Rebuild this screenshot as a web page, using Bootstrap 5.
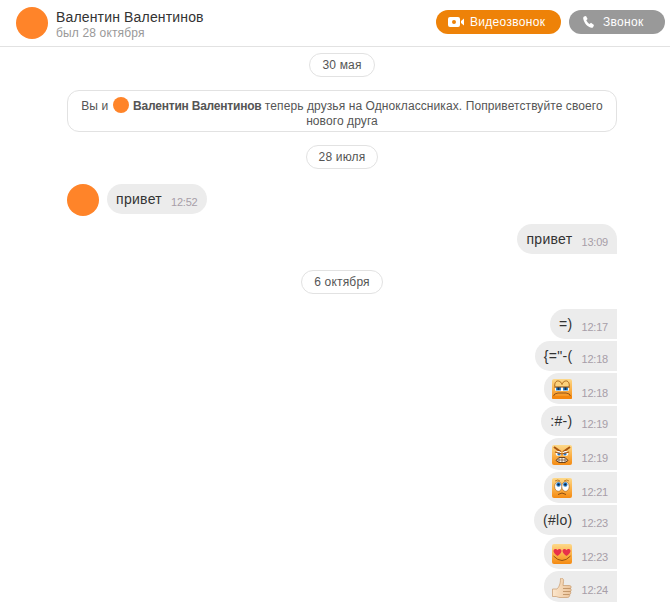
<!DOCTYPE html>
<html lang="ru">
<head>
<meta charset="utf-8">
<title>Чат</title>
<link rel="stylesheet" href="https://cdn.jsdelivr.net/npm/bootstrap@5.3.0/dist/css/bootstrap.min.css">
<style>
html,body{height:100%;overflow:hidden}
body{font-family:"Liberation Sans",Arial,sans-serif;color:#333;background:#fff;font-size:12px}
.top-bar{height:47px;border-bottom:1px solid #e2e2e2;padding:0 5px 0 16px}
.ava-lg{width:32px;height:32px;border-radius:50%;background:#ff8429;flex:none}
.ava-sm{width:16px;height:16px;border-radius:50%;background:#ff8429;display:inline-block;vertical-align:-3px;margin:0 1px}
.peer-box{padding-top:2px}
.peer-name{font-size:14px;line-height:18px;color:#333;letter-spacing:.16px}
.peer-seen{font-size:12px;line-height:15px;color:#999;letter-spacing:.15px}
.call-btn{height:24px;border-radius:12px;border:0;color:#fff;font-size:12px;padding:0;line-height:24px;letter-spacing:.3px;margin-bottom:2px}
.call-video,.call-video:hover{width:125px;background:#ee8208;gap:6px;padding-left:12px;color:#fff}
.call-voice,.call-voice:hover{width:96px;background:#999;gap:9px;padding-left:14px;color:#fff}
.feed{width:550px;margin-left:67px}
.date-pill{height:24px;border:1px solid #e2e2e2;border-radius:12px;padding:0 12px;line-height:22px;color:#555;background:#fff;letter-spacing:.18px}
.sys-note{height:42px;border:1px solid #e2e2e2;border-radius:12px;line-height:15px;padding:6px 10px 0;text-align:center;color:#555;margin:13px 0;letter-spacing:.09px}
.sys-note b{color:#555;letter-spacing:-.22px}
.bubble{background:#ececec;border-radius:15px;font-size:14px;color:#333;display:flex;padding:0 9px;height:30px;line-height:30px;letter-spacing:.3px}
.bubble-in{margin-left:8px}
.bubble-out{border-radius:15px 0 0 15px;margin-top:2px}
.bubble-out:first-child{margin-top:0}
.bubble-solo{border-radius:15px 15px 0 15px}
.stamp{font-size:11px;color:#a79ea8;margin-left:9px;line-height:1;align-self:flex-end;padding-bottom:6px;letter-spacing:-.2px}
.emo{width:20px;height:20px;display:block;margin-top:6px}
.bubble-emo{padding-left:8px;height:31px}
.bubble-emo .stamp{padding-bottom:5px}
.bubble-tall{height:32px}
.bubble-tall .stamp{padding-bottom:6px}
.bubble-tall .emo{margin-top:7px}
.bubble-thumb .emo{margin-top:7px}
.bubble-thumb .stamp{padding-bottom:6px}
.first-pill{margin-top:6px}
.gap-friend{margin-top:15px}
.gap-solo{margin-top:8px}
.gap-date{margin-top:16px}
.gap-run{margin-top:15px}
</style>
</head>
<body>
<svg width="0" height="0" class="position-absolute" aria-hidden="true">
  <defs>
    <linearGradient id="skin" x1="0" y1="0" x2="0" y2="1"><stop offset="0" stop-color="#fdd98a"/><stop offset=".5" stop-color="#fbb24a"/><stop offset="1" stop-color="#f48a12"/></linearGradient>
    <linearGradient id="thumb" x1="0" y1="0" x2="1" y2="0"><stop offset="0" stop-color="#fbe6cc"/><stop offset="1" stop-color="#ecc49b"/></linearGradient>
  </defs>
</svg>
<header class="top-bar d-flex align-items-center">
  <div class="ava-lg"></div>
  <div class="ms-2 flex-grow-1 peer-box">
    <div class="peer-name">Валентин Валентинов</div>
    <div class="peer-seen">был 28 октября</div>
  </div>
  <button class="call-btn call-video btn d-flex align-items-center">
    <svg width="16" height="10" viewBox="0 0 16 10"><path fill="#fff" fill-rule="evenodd" d="M2 0h8a2 2 0 0 1 2 2v6a2 2 0 0 1-2 2H2a2 2 0 0 1-2-2V2a2 2 0 0 1 2-2zm4 3a2 2 0 1 0 0 4 2 2 0 0 0 0-4z"/><path fill="#fff" d="M13 4l3-2.500v7L13 6z"/></svg>
    <span>Видеозвонок</span>
  </button>
  <button class="call-btn call-voice btn d-flex align-items-center ms-2">
    <svg width="11" height="12" viewBox="0 0 11 12"><path fill="#fff" d="M1 .5 3 0l1.600 3L3.300 4.200c.6 1.500 1.700 2.800 3.200 3.700L8 6.800 11 9l-.8 2c-.4.700-1.200 1-2 .8C4.500 10.700 1.300 7.500.3 3 .100 2 .3 1 1 .5z"/></svg>
    <span>Звонок</span>
  </button>
</header>
<main class="feed">
  <div class="d-flex justify-content-center first-pill"><span class="date-pill">30 мая</span></div>
  <div class="sys-note">Вы и <span class="ava-sm"></span> <b>Валентин Валентинов</b> теперь друзья на Одноклассниках. Поприветствуйте своего нового друга</div>
  <div class="d-flex justify-content-center"><span class="date-pill">28 июля</span></div>
  <div class="d-flex gap-friend">
    <div class="ava-lg"></div>
    <div class="bubble bubble-in"><span>привет</span><span class="stamp">12:52</span></div>
  </div>
  <div class="d-flex justify-content-end gap-solo">
    <div class="bubble bubble-solo"><span>привет</span><span class="stamp">13:09</span></div>
  </div>
  <div class="d-flex justify-content-center gap-date"><span class="date-pill">6 октября</span></div>
  <div class="d-flex flex-column align-items-end gap-run">
    <div class="bubble bubble-out"><span>=)</span><span class="stamp">12:17</span></div>
    <div class="bubble bubble-out"><span>{="-(</span><span class="stamp">12:18</span></div>
    <div class="bubble bubble-out bubble-emo">
      <svg class="emo" viewBox="0 0 20 20"><rect width="20" height="20" rx="2" fill="url(#skin)"/><path d="M3 9C2 4 4 1.500 6.500 2 8.500 2.300 9.500 4 10 5.500 10.500 4 11.500 2.300 13.500 2 16 1.500 18 4 17 9z" fill="#fdd27c" stroke="#9a5208" stroke-width=".8"/><rect x="3" y="8" width="14" height="4" rx="1.500" fill="#fff"/><rect x="4" y="8" width="5" height="3.500" fill="#2b86d6"/><rect x="11" y="8" width="5" height="3.500" fill="#2b86d6"/><rect x="5.500" y="8" width="2" height="3" fill="#10304f"/><rect x="12.500" y="8" width="2" height="3" fill="#10304f"/><path d="M3 8h14" stroke="#8a4b10" stroke-width="1"/><path d="M1 18q1-4 5-4h8q4 0 5 4" fill="none" stroke="#8a4b10" stroke-width=".9"/><rect y="17" width="20" height="3" rx="1" fill="#f4860c"/></svg>
      <span class="stamp">12:18</span></div>
    <div class="bubble bubble-out"><span>:#-)</span><span class="stamp">12:19</span></div>
    <div class="bubble bubble-out bubble-emo bubble-tall">
      <svg class="emo" viewBox="0 0 20 20"><rect width="20" height="20" rx="2" fill="url(#skin)"/><path d="M2 2l7 5M18 2l-7 5" stroke="#a8540e" stroke-width="2"/><ellipse cx="6.500" cy="8.500" rx="2.700" ry="2.500" fill="#fff"/><ellipse cx="13.500" cy="8.500" rx="2.700" ry="2.500" fill="#fff"/><circle cx="7" cy="9" r="1.600" fill="#2378c8"/><circle cx="13" cy="9" r="1.600" fill="#2378c8"/><path d="M3 7l7 2 7-2" fill="none" stroke="#a8540e" stroke-width="1.200"/><path d="M4 15.500l3-3h6l3 3-3 2H7z" fill="#f7f0e4" stroke="#5f340e" stroke-width=".9"/><path d="M7 12.500v5M10 12.500v5M13 12.500v5M4.500 15h11" stroke="#5f340e" stroke-width=".6"/></svg>
      <span class="stamp">12:19</span></div>
    <div class="bubble bubble-out bubble-emo">
      <svg class="emo" viewBox="0 0 20 20"><rect width="20" height="20" rx="2" fill="url(#skin)"/><path d="M3 3q3-2 5 0M12 3q3-2 5 0" fill="none" stroke="#b56a14" stroke-width=".8"/><ellipse cx="6.300" cy="8.500" rx="3.700" ry="4.800" fill="#fff" stroke="#9a5a15" stroke-width=".6"/><ellipse cx="13.500" cy="8.500" rx="3.700" ry="4.800" fill="#fff" stroke="#9a5a15" stroke-width=".6"/><circle cx="6.500" cy="6.500" r="2.200" fill="#2378c8"/><circle cx="13.300" cy="6.500" r="2.200" fill="#2378c8"/><circle cx="6.500" cy="6.500" r="1.100" fill="#10243a"/><circle cx="13.300" cy="6.500" r="1.100" fill="#10243a"/><path d="M6 16.500q4-3 8 0" fill="none" stroke="#8a4b10"/></svg>
      <span class="stamp">12:21</span></div>
    <div class="bubble bubble-out"><span>(#lo)</span><span class="stamp">12:23</span></div>
    <div class="bubble bubble-out bubble-emo bubble-tall">
      <svg class="emo" viewBox="0 0 20 20"><rect width="20" height="20" rx="2" fill="url(#skin)"/><path d="M5.500 12C1.500 9 .5 6.500 2.500 5.200 4 4.500 5 5.300 5.500 6.300 6 5.300 7 4.500 8.500 5.200 10.500 6.500 9.500 9 5.500 12z" fill="#e8304a"/><path d="M14.500 12c-4-3-5-5.500-3-6.800 1.500-.7 2.500.1 3 1.100.5-1 1.500-1.800 3-1.100 2 1.300 1 3.800-3 6.800z" fill="#e8304a"/><path d="M1.500 12q8.500 9 17 0" fill="none" stroke="#8a4b10" stroke-width=".9"/></svg>
      <span class="stamp">12:23</span></div>
    <div class="bubble bubble-out bubble-emo bubble-thumb">
      <svg class="emo" viewBox="0 0 20 20"><path d="M8.500 0.500c2-1 3.500.8 3 3L11 7.500h6.500c1.800 0 2 2 1 3 1 1 .8 2.500 0 3 .5 1 .3 2.500-.8 3 .3 1.500-.7 3-2.200 3H8c-2 0-3-1-4-1H.5V11H5c2-2 3.500-5 3.500-10.500z" fill="url(#thumb)" stroke="#c79a6b" stroke-width=".7"/><path d="M11 10.500h7.500M11 13.500h7.500M11 16.500h6.500" stroke="#b98a5c" stroke-width=".8"/></svg>
      <span class="stamp">12:24</span></div>
  </div>
</main>
</body>
</html>
